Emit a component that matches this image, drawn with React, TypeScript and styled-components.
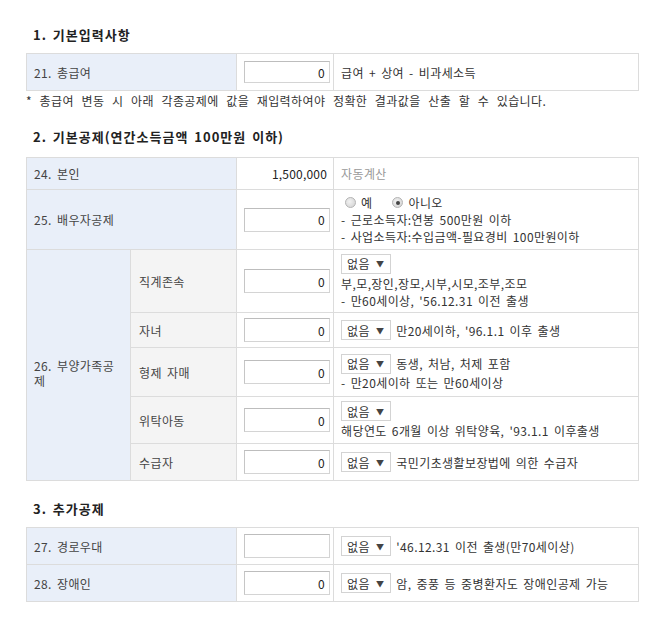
import styled, { createGlobalStyle, css } from "styled-components";

const GlobalStyle = createGlobalStyle`
    body {
        margin: 0;
        background: #fff;
        font-family: "Noto Sans CJK KR", "Noto Sans", sans-serif;
        font-size: 12px;
        letter-spacing: 0.4px;
        word-spacing: 2px;
        color: #333;
    }
`;

const Page = styled.div`
    width: 613px;
    padding: 27px 0 0 26px;
`;

const SectionTitle = styled.h3<{ $top?: number; $bottom?: number }>`
    margin: ${(p) => p.$top ?? 0}px 0 ${(p) => p.$bottom ?? 10}px 7px;
    font-size: 13px;
    line-height: 16px;
    font-weight: bold;
    letter-spacing: 1px;
    word-spacing: 2px;
    color: #222;
`;

const Note = styled.p`
    margin: 1px 0 0 0;
    font-size: 12px;
    line-height: 17px;
    color: #333;
    word-spacing: 4.5px;
`;

const Table = styled.table`
    width: 613px;
    table-layout: fixed;
    border-collapse: collapse;
    border: 1px solid #d9d9d9;
`;

const Row = styled.tr<{ $h: number }>`
    height: ${(p) => p.$h}px;
`;

const Label = styled.td<{ $tone?: "blue" | "gray"; $shift?: number }>`
    padding: ${(p) => p.$shift ?? 0}px 9px 0 7px;
    border: 1px solid #dcdcdc;
    color: #444;
    line-height: 15px;
    vertical-align: middle;

    ${(p) =>
        p.$tone === "gray"
            ? css`
                  background: #f4f4f4;
                  padding-left: 8px;
              `
            : css`
                  background: #e9eff9;
              `}
`;

const ValueCell = styled.td`
    padding: 0 3px 0 7px;
    border: 1px solid #dcdcdc;
    text-align: right;
    vertical-align: middle;
    background: #fff;
`;

const StaticValue = styled.span`
    padding-right: 3px;
    color: #222;
    letter-spacing: 0.2px;
`;

const Input = styled.div<{ $h?: number }>`
    height: ${(p) => p.$h ?? 22}px;
    box-sizing: border-box;
    padding: 0 4px;
    border: 1px solid #d4d4d4;
    border-top-color: #bdbdbd;
    border-left-color: #c6c6c6;
    display: flex;
    align-items: center;
    justify-content: flex-end;
    background: #fff;
    color: #222;
`;

const DescCell = styled.td`
    padding: 0 7px;
    border: 1px solid #dcdcdc;
    vertical-align: middle;
    background: #fff;
    line-height: 17px;
    color: #333;
`;

const Muted = styled.span`
    color: #999;
`;

const Line = styled.div`
    display: flex;
    align-items: center;
    gap: 5px;
    line-height: 17px;
`;

const SelectBox = styled.span`
    display: inline-flex;
    align-items: center;
    gap: 6px;
    height: 20px;
    box-sizing: border-box;
    padding: 0 6px 0 5px;
    border: 1px solid #d3d3d3;
    background: #fff;
    color: #333;
    flex: none;
`;

const Arrow = styled.span`
    font-size: 8px;
    color: #444;
`;

const Stack = styled.div<{ $gap?: number }>`
    display: flex;
    flex-direction: column;
    gap: ${(p) => p.$gap ?? 0}px;
`;

const RadioGroup = styled.div`
    display: flex;
    align-items: center;
    gap: 20px;
    padding-left: 4px;
    line-height: 17px;
`;

const RadioItem = styled.label`
    display: inline-flex;
    align-items: center;
    gap: 5px;
`;

const RadioDot = styled.span<{ $checked?: boolean }>`
    position: relative;
    width: 11px;
    height: 11px;
    box-sizing: border-box;
    border-radius: 50%;
    border: 1px solid #b5b5b5;
    background: radial-gradient(circle at 40% 40%, #f2f2f2, #cfcfcf);

    ${(p) =>
        p.$checked &&
        css`
            &::after {
                content: "";
                position: absolute;
                left: 2.5px;
                top: 2.5px;
                width: 4px;
                height: 4px;
                border-radius: 50%;
                background: #444;
            }
        `}
`;

const Select = () => (
    <SelectBox>
        없음<Arrow>▼</Arrow>
    </SelectBox>
);

type DependentRow = {
    name: string;
    height: number;
    desc: React.ReactNode;
};

const dependents: DependentRow[] = [
    {
        name: "직계존속",
        height: 63,
        desc: (
            <Stack $gap={1}>
                <Line>
                    <Select />
                </Line>
                <Stack>
                    <Line>부,모,장인,장모,시부,시모,조부,조모</Line>
                    <Line>- 만60세이상, '56.12.31 이전 출생</Line>
                </Stack>
            </Stack>
        ),
    },
    {
        name: "자녀",
        height: 35,
        desc: (
            <Line>
                <Select />
                만20세이하, '96.1.1 이후 출생
            </Line>
        ),
    },
    {
        name: "형제 자매",
        height: 49,
        desc: (
            <Stack>
                <Line>
                    <Select />
                    동생, 처남, 처제 포함
                </Line>
                <Line>- 만20세이하 또는 만60세이상</Line>
            </Stack>
        ),
    },
    {
        name: "위탁아동",
        height: 47,
        desc: (
            <Stack $gap={1}>
                <Line>
                    <Select />
                </Line>
                <Line>해당연도 6개월 이상 위탁양육, '93.1.1 이후출생</Line>
            </Stack>
        ),
    },
    {
        name: "수급자",
        height: 37,
        desc: (
            <Line>
                <Select />
                국민기초생활보장법에 의한 수급자
            </Line>
        ),
    },
];

const Cols = () => (
    <colgroup>
        <col style={{ width: 104 }} />
        <col style={{ width: 106 }} />
        <col style={{ width: 97 }} />
        <col />
    </colgroup>
);

const App = () => {
    return (
        <Page>
            <GlobalStyle />

            <SectionTitle $bottom={10}>1. 기본입력사항</SectionTitle>
            <Table>
                <Cols />
                <tbody>
                    <Row $h={37}>
                        <Label colSpan={2}>21. 총급여</Label>
                        <ValueCell>
                            <Input>0</Input>
                        </ValueCell>
                        <DescCell>급여 + 상여 - 비과세소득</DescCell>
                    </Row>
                </tbody>
            </Table>
            <Note>* 총급여 변동 시 아래 각종공제에 값을 재입력하여야 정확한 결과값을 산출 할 수 있습니다.</Note>

            <SectionTitle $top={20} $bottom={12}>
                2. 기본공제(연간소득금액 100만원 이하)
            </SectionTitle>
            <Table>
                <Cols />
                <tbody>
                    <Row $h={32}>
                        <Label colSpan={2}>24. 본인</Label>
                        <ValueCell>
                            <StaticValue>1,500,000</StaticValue>
                        </ValueCell>
                        <DescCell>
                            <Muted>자동계산</Muted>
                        </DescCell>
                    </Row>
                    <Row $h={60}>
                        <Label colSpan={2}>25. 배우자공제</Label>
                        <ValueCell>
                            <Input $h={24}>0</Input>
                        </ValueCell>
                        <DescCell>
                            <Stack>
                                <RadioGroup>
                                    <RadioItem>
                                        <RadioDot />예
                                    </RadioItem>
                                    <RadioItem>
                                        <RadioDot $checked />
                                        아니오
                                    </RadioItem>
                                </RadioGroup>
                                <Line>- 근로소득자:연봉 500만원 이하</Line>
                                <Line>- 사업소득자:수입금액-필요경비 100만원이하</Line>
                            </Stack>
                        </DescCell>
                    </Row>
                    {dependents.map((d, i) => (
                        <Row $h={d.height} key={d.name}>
                            {i === 0 && (
                                <Label rowSpan={dependents.length} $shift={16}>
                                    26. 부양가족공제
                                </Label>
                            )}
                            <Label $tone="gray">{d.name}</Label>
                            <ValueCell>
                                <Input $h={24}>0</Input>
                            </ValueCell>
                            <DescCell>{d.desc}</DescCell>
                        </Row>
                    ))}
                </tbody>
            </Table>

            <SectionTitle $top={20} $bottom={10}>
                3. 추가공제
            </SectionTitle>
            <Table>
                <Cols />
                <tbody>
                    <Row $h={37}>
                        <Label colSpan={2}>27. 경로우대</Label>
                        <ValueCell>
                            <Input $h={24} />
                        </ValueCell>
                        <DescCell>
                            <Line>
                                <Select />
                                '46.12.31 이전 출생(만70세이상)
                            </Line>
                        </DescCell>
                    </Row>
                    <Row $h={37}>
                        <Label colSpan={2}>28. 장애인</Label>
                        <ValueCell>
                            <Input $h={24}>0</Input>
                        </ValueCell>
                        <DescCell>
                            <Line>
                                <Select />
                                암, 중풍 등 중병환자도 장애인공제 가능
                            </Line>
                        </DescCell>
                    </Row>
                </tbody>
            </Table>
        </Page>
    );
};

export default App;
